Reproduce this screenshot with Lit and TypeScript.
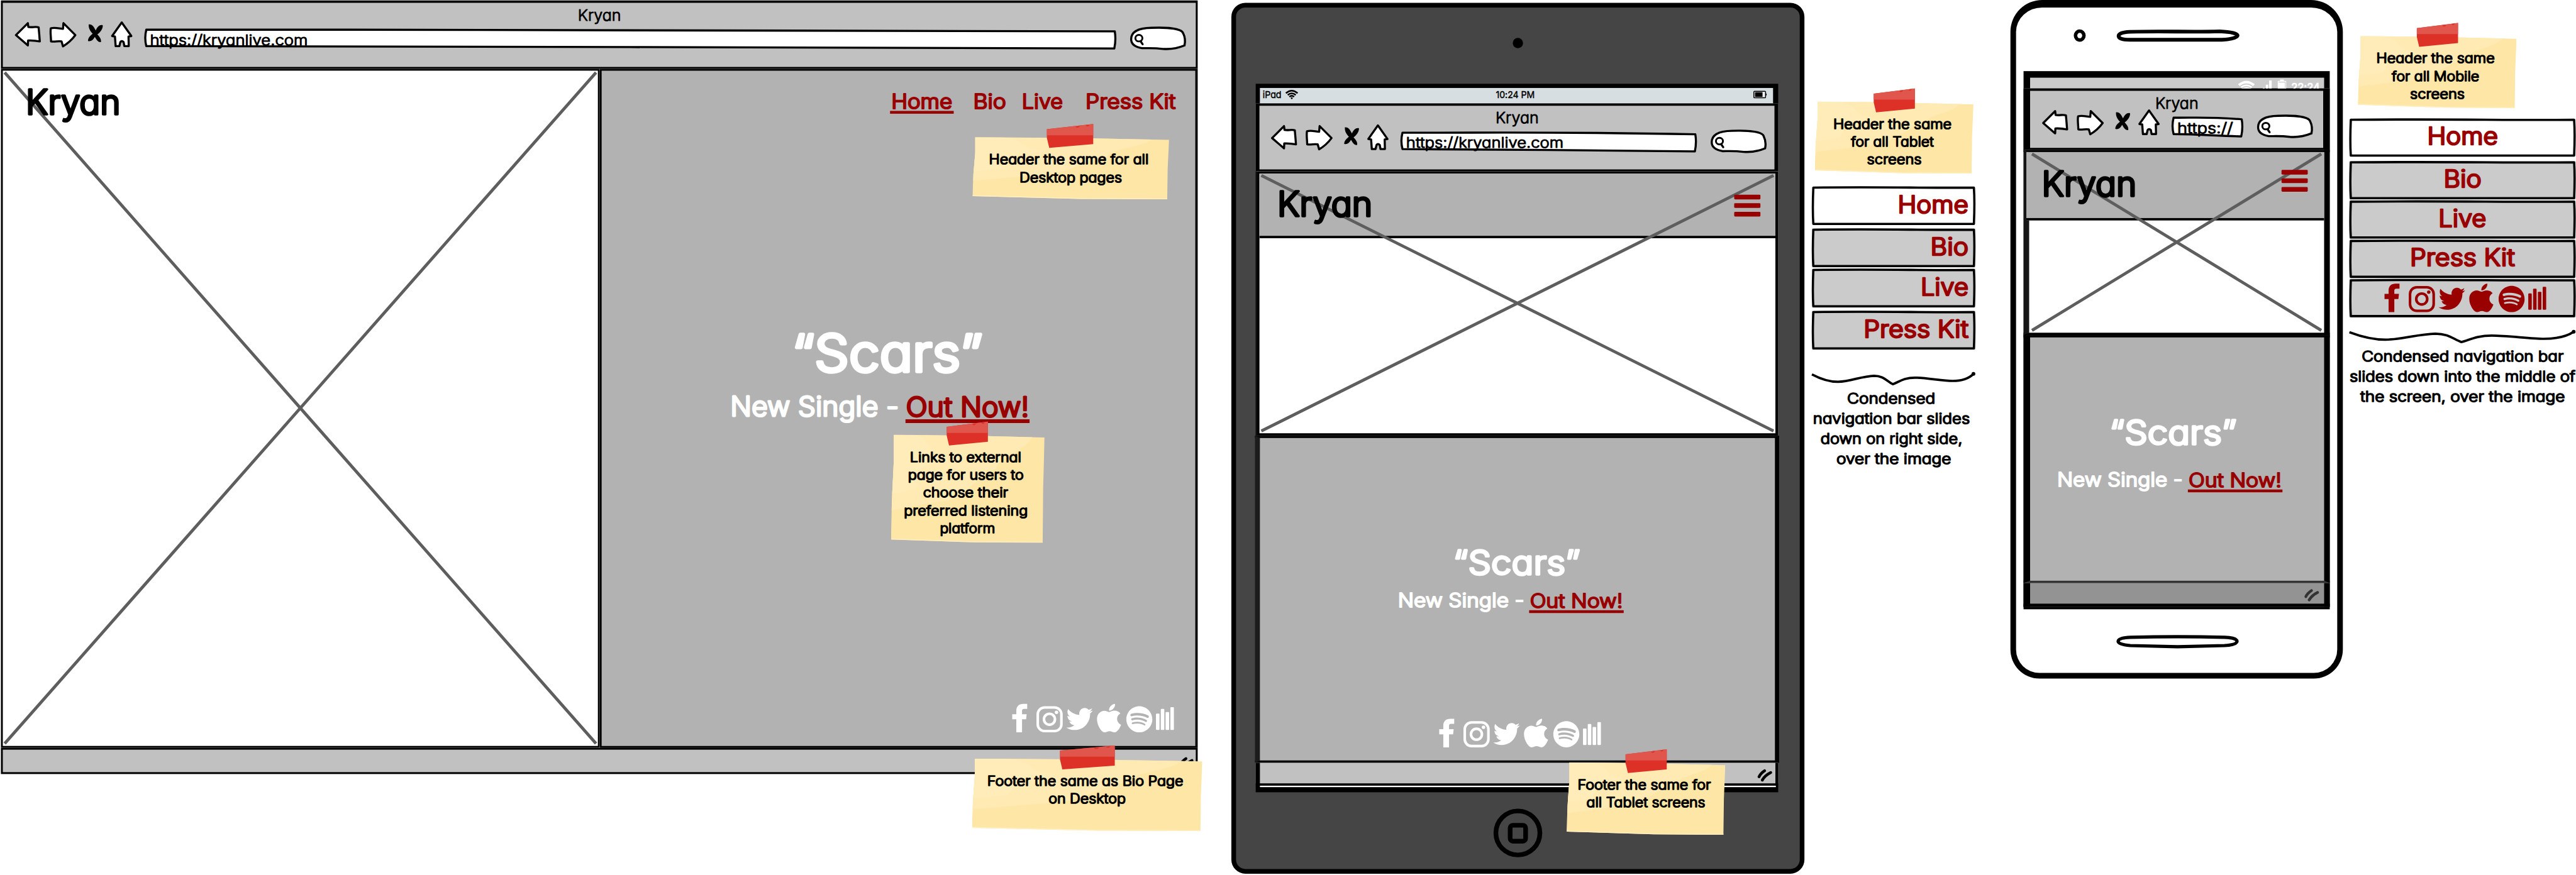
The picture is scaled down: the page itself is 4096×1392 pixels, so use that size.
import { LitElement, html, svg, css } from "lit";

const INK = "#000";
const RED = "#990000";

/* One line of lettering. The box is exactly as wide as the word and as tall as its capitals. */
const word = (text: string, width: number, cap: number, color = INK, weight = 300, stroke = 0.085) => {
  const pen = cap * stroke;
  const size = (cap - pen) / 0.727;
  return html`<svg class="word" width=${width} height=${cap} viewBox="0 0 ${width} ${cap}">
    <text x=${-size * 0.055} y=${cap - pen / 2} textLength=${width + size * 0.1} lengthAdjust="spacingAndGlyphs"
      font-size=${size} font-weight=${weight} fill=${color} stroke=${color} stroke-width=${pen}>${text}</text>
  </svg>`;
};

const sharedStyles = css`
  * { box-sizing: border-box; }
  .word {
    display: block; overflow: visible; flex: none;
    font-family: Inter, "Open Sans", sans-serif;
    font-feature-settings: "cv11" 1, "calt" 0;
    stroke-linejoin: round; white-space: pre;
  }
  svg { display: block; flex: none; overflow: visible; }
`;

class StickyNote extends LitElement {
  static properties = {
    lines: { attribute: false }, w: { type: Number }, h: { type: Number },
    tapeX: { type: Number }, tapeW: { type: Number },
  };
  declare lines: [string, number][];
  declare w: number;
  declare h: number;
  declare tapeX: number;
  declare tapeW: number;
  static styles = [sharedStyles, css`
    :host { display: block; flex: none; }
    .note { position: relative; }
    .paper { position: absolute; left: 0; top: 0; }
    .lines { position: relative; display: flex; flex-direction: column; align-items: center; gap: 15px; padding-top: 36px; }
    .line { margin-right: 8px; }
    .line:last-child { margin-right: 0; }
  `];
  render() {
    const { w, h, tapeX: x, tapeW: t } = this;
    return html`<div class="note" style="width:${w}px">
      <svg class="paper" width=${w} height=${h} viewBox="0 0 ${w} ${h}">
        <defs>
          <clipPath id="sheet"><path d="M6 0L${w * 0.5} 2L${w} 6L${w - 3} ${h * 0.5}L${w - 4} ${h}L${w * 0.55} ${h - 1}L0 ${h - 7}L2 ${h * 0.6}L6 ${h * 0.25}Z"/></clipPath>
        </defs>
        <g clip-path="url(#sheet)">
          <rect width=${w} height=${h} fill="#fee6a7"/>
          <path d="M0 0H${w * 0.93}C${w * 0.85} ${h * 0.2} ${w * 0.72} ${h * 0.15} ${w * 0.68} ${h * 0.32}C${w * 0.5} ${h * 0.42} ${w * 0.52} ${h * 0.6} ${w * 0.3} ${h * 0.62}L0 ${h * 0.7}Z" fill="#ffeab3"/>
          <path d="M0 0H${w * 0.16}C${w * 0.3} ${h * 0.08} ${w * 0.22} ${h * 0.2} ${w * 0.38} ${h * 0.22}L${w * 0.2} ${h * 0.3}L${w * 0.16} ${h * 0.5}L0 ${h * 0.55}Z" fill="#ffecb9"/>
          <path d="M0 ${h - 7}L${w * 0.55} ${h - 1}L${w} ${h}" fill="none" stroke="#ffeec0" stroke-width="4"/>
        </g>
        <g transform="translate(${x} -28)">
          <path d="M0 11L${t} 0V43L5 51L0 30Z" fill="#dd3127"/>
          <path d="M0 11L${t} 0V24H0Z" fill="#e0554c"/>
          <path d="M${t * 0.62} 5.5C${t * 0.64} 9 ${t * 0.7} 8 ${t * 0.71} 4ZM${t * 0.84} 2.5C${t * 0.86} 6 ${t * 0.91} 5 ${t * 0.92} 1.5Z" fill="#dd3127"/>
        </g>
      </svg>
      <div class="lines">${this.lines.map(([text, width]) => html`<div class="line">${word(text, width, 23, INK, 300, 0.09)}</div>`)}</div>
    </div>`;
  }
}
customElements.define("sticky-note", StickyNote);

class BrowserBar extends LitElement {
  static properties = {
    w: { type: Number }, h: { type: Number }, side: { type: Number }, lead: { type: Number },
    urlW: { type: Number }, url: {}, textW: { type: Number },
  };
  declare w: number;
  declare h: number;
  declare side: number;
  declare lead: number;
  declare urlW: number;
  declare url: string;
  declare textW: number;
  static styles = [sharedStyles, css`
    :host { display: block; flex: none; }
    .bar { background: #c1c1c1; border: 0 solid #000; border-top-width: 5px; border-bottom-width: 4px; }
    .title { display: flex; justify-content: center; padding-top: 13px; }
    .tools { display: flex; align-items: flex-start; }
    .address { position: relative; margin: 16px 29px 0 21px; }
    .frame { position: absolute; left: 0; top: 0; }
    .url { position: relative; padding: 12px 0 0 14px; }
    .find { margin-top: 12px; }
  `];
  render() {
    const u = this.urlW;
    return html`<div class="bar" style="width:${this.w}px;height:${this.h}px;border-left-width:${this.side}px;border-right-width:${this.side}px">
      <div class="title">${word("Kryan", 89, 25.5, INK, 300, 0.05)}</div>
      <div class="tools" style="padding-left:${this.lead - this.side}px">
        <svg width="258" height="58" viewBox="29 45 258 58" fill="#fff" stroke="#000" stroke-width="4.500" stroke-linejoin="round">
          <path d="M34 75L59.500 49.500L60.500 57.500C68 59.500 76 56 82.500 58.500Q84 74 85 88.500Q72 86 60 86.500L59.500 97Z"/>
          <path d="M161 75L135.500 49.500L134.500 61.500C126 61 117 58 108.500 60.500C107 70 109 79 109 88.500C117 90 124 87 131.500 88.500L134.500 99Q150 90 161 75Z"/>
          <path d="M260 48L280.500 77L274.500 78L275 98.500H265.500L264 90Q260 86 257 90L255 98.500H247L245.500 78L239.500 77Z"/>
          <path d="M189.500 52C197 51 201 58 204.500 65C208 57 214 52 219.500 54C220 62 214 69 208 73.500C213 79 217 84 215.500 90C209 91 206 84 202.500 79C199 86 194 89 188 87.500C188 81 193 76 198 72C192 66 189 60 189.500 52Z" fill="#000" stroke="none"/>
        </svg>
        <div class="address">
          <svg class="frame" width=${u} height="45" viewBox="0 0 ${u} 45">
            <path d="M4.500 2.500C${u * 0.3} 3 ${u * 0.5} 0 ${u - 4} 6Q${u - 1} 24 ${u - 5} 42.500C${u * 0.6} 41 ${u * 0.4} 38 4.500 37.500Q0 20 4.500 2.500Z" fill="#fff" stroke="#000" stroke-width="4.500" stroke-linejoin="round"/>
          </svg>
          <div class="url" style="width:${u}px">${word(this.url, this.textW, 24, INK, 300, 0.06)}</div>
        </div>
        <svg class="find" width="119" height="50" viewBox="0 0 119 50" fill="#fff" stroke="#000" stroke-linecap="round">
          <path d="M2 27C2 12 16 3 45 2.500C85 1 110 5 113 14Q119 26 116 40C104 45 90 49 70 47.500C50 45 38 46 25 46Q2 42 2 27Z" stroke-width="4.500"/>
          <ellipse cx="18.500" cy="24.500" rx="7.500" ry="7" stroke-width="4"/>
          <path d="M22 31L26.500 37.500" stroke-width="4.500"/>
        </svg>
      </div>
    </div>`;
  }
}
customElements.define("browser-bar", BrowserBar);

const socialIcons = (color: string) => html`<svg width="346" height="61" viewBox="0 0 346 61" fill=${color}>
  <svg width="32" height="61" viewBox="410 163 81 182" preserveAspectRatio="none"><path d="M432 229V208C432 178 446 163 470 163H491V195H474C465 195 463 201 463 209V229H488L485 262H463V345H432V262H410V229Z"/></svg>
  <g fill="none" stroke=${color}>
    <rect x="54.500" y="7.800" width="50.500" height="50.500" rx="14.500" stroke-width="5.500"/>
    <circle cx="79.500" cy="33" r="11.700" stroke-width="5.600"/>
  </g>
  <circle cx="94.500" cy="18.300" r="3.700"/>
  <svg x="115.600" y="9" width="56.500" height="47" viewBox="0 48 512 416" preserveAspectRatio="none"><path d="M459.370 151.716c.325 4.548.325 9.097.325 13.645 0 138.720-105.583 298.558-298.558 298.558-59.452 0-114.680-17.219-161.137-47.106 8.447.974 16.568 1.299 25.340 1.299 49.055 0 94.213-16.568 130.274-44.832-46.132-.975-84.792-31.188-98.112-72.772 6.498.974 12.995 1.624 19.818 1.624 9.421 0 18.843-1.300 27.614-3.573-48.081-9.747-84.143-51.980-84.143-102.985v-1.299c13.969 7.797 30.214 12.670 47.431 13.319-28.264-18.843-46.781-51.005-46.781-87.391 0-19.492 5.197-37.360 14.294-52.954 51.655 63.675 129.300 105.258 216.365 109.807-1.624-7.797-2.599-15.918-2.599-24.040 0-57.828 46.782-104.934 104.934-104.934 30.213 0 57.502 12.670 76.670 33.137 23.715-4.548 46.456-13.320 66.599-25.340-7.798 24.366-24.366 44.833-46.132 57.827 21.117-2.273 41.584-8.122 60.426-16.243-14.292 20.791-32.161 39.308-52.628 54.253z"/></svg>
  <svg x="181" y="0" width="51.500" height="61" viewBox="4 32 376.500 448" preserveAspectRatio="none"><path d="M318.700 268.700c-.2-36.700 16.400-64.400 50-84.800-18.800-26.900-47.200-41.700-84.700-44.600-35.500-2.800-74.300 20.700-88.500 20.700-15 0-49.400-19.700-76.400-19.700C63.300 141.200 4 184.800 4 273.500q0 39.300 14.400 81.200c12.800 36.700 59 126.700 107.200 125.200 25.200-.6 43-17.900 75.800-17.900 31.800 0 48.300 17.900 76.400 17.900 48.600-.7 90.400-82.500 102.600-119.300-65.200-30.700-61.700-90-61.700-91.900zm-56.600-164.200c27.300-32.400 24.800-61.900 24-72.500-24.100 1.400-52 16.400-67.900 34.900-17.500 19.800-27.800 44.300-25.600 71.900 26.100 2 49.900-11.400 69.500-34.300z"/></svg>
  <svg x="243.700" y="5" width="55.500" height="56" viewBox="0 8 496 496" preserveAspectRatio="none"><path d="M248 8C111.100 8 0 119.100 0 256s111.100 248 248 248 248-111.100 248-248S384.900 8 248 8zm100.700 364.900c-4.200 0-6.800-1.300-10.700-3.600-62.400-37.600-135-39.200-206.700-24.500-3.900 1-9 2.600-11.900 2.600-9.700 0-15.800-7.700-15.800-15.800 0-10.300 6.100-15.200 13.600-16.800 81.900-18.100 165.600-16.500 237 26.200 6.100 3.900 9.700 7.400 9.700 16.500s-7.100 15.400-15.200 15.400zm26.900-65.600c-5.200 0-8.700-2.300-12.300-4.200-62.500-37-155.700-51.900-238.600-29.400-4.800 1.300-7.400 2.600-11.900 2.600-10.700 0-19.400-8.700-19.400-19.400s5.200-17.800 15.500-20.700c27.800-7.800 56.200-13.600 97.800-13.600 64.900 0 127.600 16.100 177 45.500 8.100 4.800 11.300 11 11.300 19.700-.1 10.800-8.500 19.500-19.400 19.500zm31-76.200c-5.200 0-8.400-1.300-12.900-3.900-71.200-42.500-198.500-52.700-280.900-29.700-3.600 1-8.100 2.600-12.900 2.600-13.200 0-23.300-10.300-23.300-23.600 0-13.600 8.400-21.300 17.400-23.900 35.200-10.300 74.600-15.200 117.500-15.200 73 0 149.500 15.200 205.400 47.800 7.800 4.500 12.900 10.700 12.900 22.600 0 13.600-11 23.300-23.200 23.300z"/></svg>
  ${[[0, 21], [10.300, 11], [20.600, 17.500], [30.800, 7]].map(([x, y]) => svg`<rect x=${307 + x} y=${y} width="7.500" height=${56 - y} rx="1.500"/>`)}
</svg>`;

const cross = (w: number, h: number) => html`<svg class="cross" width=${w} height=${h} viewBox="0 0 ${w} ${h}">
  <path d="M4 4L${w - 4} ${h - 5}M${w - 4} 4L4 ${h - 5}" stroke="#5e5e5e" stroke-width="6.500"/></svg>`;

const burger = html`<svg width="56" height="47" viewBox="0 0 56 47" fill=${RED}>
  ${[0, 18.300, 36.600].map((y) => svg`<rect y=${y} width="56" height="10" rx="2"/>`)}</svg>`;

const grip = (color: string) => html`<svg width="32" height="26" viewBox="0 0 32 26" fill="none" stroke=${color} stroke-width="6" stroke-linecap="round">
  <path d="M3 16Q6 9 15 3M10 23Q16 13 28 7"/></svg>`;

const brace = (w: number) => html`<svg width=${w} height="30" viewBox="0 0 ${w} 30">
  <path d="M0 5C${w * 0.06} 16 ${w * 0.11} 21 ${w * 0.16} 21C${w * 0.24} 20 ${w * 0.3} 9 ${w * 0.38} 8C${w * 0.44} 8 ${w * 0.46} 20 ${w * 0.495} 26C${w * 0.53} 22 ${w * 0.56} 12 ${w * 0.63} 12C${w * 0.7} 12 ${w * 0.8} 19 ${w * 0.86} 19C${w * 0.92} 19 ${w * 0.96} 14 ${w - 4} 4"
    fill="none" stroke="#000" stroke-width="5" stroke-linejoin="round"/>
  <circle cx=${w - 4} cy="4" r="4"/></svg>`;

const single = (white: number, gap: number, red: number, cap: number, line: number) => html`<div class="single">
  ${word("New Single -", white, cap, "#fff")}
  <div class="out" style="margin-left:${gap}px">
    <div class="outword">${word("Out Now!", red, cap, RED)}</div>
    <div class="rule" style="height:${line}px"></div>
  </div></div>`;

const menuButton = (w: number, h: number, fill: string, content: unknown, cls: string) => html`<div class="button ${cls}" style="width:${w}px;height:${h}px">
  <svg class="edge" width=${w} height=${h} viewBox="0 0 ${w} ${h}">
    <rect width=${w} height=${h} fill=${fill}/>
    <path d="M3 3C${w * 0.4} 1 ${w * 0.7} 4 ${w - 3} 3Q${w - 1} ${h * 0.4} ${w - 3} ${h - 3}C${w * 0.6} ${h - 2} ${w * 0.3} ${h - 4} 3 ${h - 3}Q1 ${h * 0.6} 3 3Z" fill="none" stroke="#000" stroke-width="4.800" stroke-linejoin="round"/>
  </svg>
  <div class="label">${content}</div></div>`;

const redWord = (text: string, width: number) => word(text, width, 40, RED);

class AppRoot extends LitElement {
  static styles = [sharedStyles, css`
    :host { display: block; width: 4096px; height: 1392px; overflow: hidden; background: #fff; }
    .board { transform: scale(0.74446); transform-origin: 0 0; width: 5502px; height: 1870px; display: flex; align-items: flex-start; }
    .desktop { position: relative; width: 2556px; margin: 1px 0 0 2px; flex: none; }
    .panels { display: flex; height: 1451px; }
    .picture { position: relative; background: #fff; border: 4px solid #000; }
    .desktop .picture { width: 1279px; padding: 38px 0 0 53px; }
    .cross { position: absolute; left: 0; top: 0; }
    .logo { position: relative; }
    .info { background: #b2b2b2; border: 4px solid #000; display: flex; flex-direction: column; }
    .desktop .info { width: 1277px; border-right-width: 5px; }
    .nav { display: flex; align-self: flex-end; padding: 48px 44px 0 0; }
    .underlined { border-bottom: 6.5px solid #990000; padding: 0 5px 3px; margin: 0 -5px; }
    .g-bio { margin-left: 49px; } .g-live { margin-left: 38px; } .g-press { margin-left: 53px; }
    .single { display: flex; align-items: flex-start; }
    .outword { padding: 2px 4px 3px; }
    .out { display: flex; flex-direction: column; }
    .rule { background: #990000; }
    .d-scars { padding: 468px 0 0 413px; }
    .d-single { padding: 48px 0 0 278px; height: 109px; }
    .d-social { padding: 598px 0 0 877px; }
    .status { height: 56px; background: #c1c1c1; border: 4px solid #000; display: flex; justify-content: flex-end; }
    .desktop .status { padding: 16px 4px 0 0; }
    .float { position: absolute; }
    .n1 { left: 2074.5px; top: 292px; } .n3 { left: 1900.600px; top: 928px; } .n4 { left: 2074.300px; top: 1620px; }
    .n5 { left: 706px; top: 1613px; }

    .tablet { position: relative; flex: none; width: 1224px; height: 1861px; margin: 6px 0 0 72px; background: #454545; border: 10px solid #000; border-radius: 30px; display: flex; flex-direction: column; padding-left: 42px; }
    .camera { width: 22px; height: 22px; border-radius: 50%; background: #000; margin: 65px 0 76px 549px; }
    .screen { width: 1116px; height: 1514px; background: #000; padding-top: 9px; flex: none; }
    .ipad { height: 33px; margin: 0 11px 0 9px; background: #d6dee1; border-bottom: 1px solid #fff; display: flex; align-items: center; justify-content: space-between; padding: 0 13px 4px 7px; }
    .ipadname { display: flex; gap: 9px; align-items: center; width: 76px; }
    .ipadbatt { width: 29px; margin-left: 47px; }
    .tablet .picture { height: 565px; width: 1114px; border-width: 5px 6px; margin-left: 2px; }
    .band { height: 138px; background: #b2b2b2; border-bottom: 5px solid #000; }
    .top { position: absolute; left: 0; right: 0; top: 0; display: flex; justify-content: space-between; align-items: flex-start; }
    .tablet .top { padding: 36px 32px 0 42px; }
    .tablet .info { height: 699px; width: 1120px; border: 5px solid #000; border-left-color: #1c1c1c; border-left-width: 11px; border-right-width: 9px; margin-left: -2px; }
    .t-scars { padding: 237px 0 0 417px; }
    .t-single { padding: 35px 0 0 297px; height: 68.500px; }
    .t-social { padding: 237px 0 0 383px; }
    .tablet .status { height: 49px; border-width: 0 6px 5px 9px; padding: 14px 6px 0 0; }
    .whiteline { height: 3px; background: #fff; margin: 0 5px 0 9px; }
    .homebtn { margin: 35px 0 0 508px; }

    .tside { width: 349px; margin: 217px 0 0 16px; flex: none; display: flex; flex-direction: column; }
    .tnote { margin-left: 6px; height: 181px; }
    .button { position: relative; display: flex; }
    .edge { position: absolute; left: 0; top: 0; }
    .label { position: relative; flex: 1; display: flex; padding-top: 18.5px; }
    .right .label { justify-content: flex-end; padding-right: 17px; }
    .mid .label { justify-content: center; padding-top: 18px; }
    .mid.social .label { padding: 10px 0 0 12px; }
    .b7 { margin-bottom: 6.5px; } .b3 { margin-bottom: 2.5px; } .b8 { margin-bottom: 8px; } .b1 { margin-bottom: 1.5px; }
    .caption { display: flex; flex-direction: column; align-items: center; gap: 18px; }
    .tside .caption { padding-top: 13px; } .tside .caption > :not(:last-child) { margin-right: 10px; }
    .tbrace { padding-top: 47.5px; }

    .phone { flex: none; width: 710px; height: 1450px; margin-left: 75px; border: 12px solid #000; border-top-width: 16px; border-radius: 68px 68px 62px 62px; background: #fff; padding-left: 16px; display: flex; flex-direction: column; }
    .ears { display: flex; align-items: center; gap: 66px; padding: 47px 0 63px 107px; flex: none; }
    .pscreen { width: 654px; height: 1150px; background: #000; padding-top: 14px; flex: none; }
    .android { height: 23px; margin: 0 12px 0 14px; background: #cbcbcb; overflow: hidden; display: flex; justify-content: flex-end; align-items: flex-start; padding: 4px 10px 0 0; }
    .android .clock { margin: 7px 0 0 11px; }
    .phone .picture { height: 396px; border-width: 5px 12px 5px 12px; border-left-color: #161616; }
    .phone .band { height: 146px; margin-left: -6px; }
    .phone .cross { left: 2px; }
    .phone .top { padding: 38px 35px 0 31px; }
    .phone .info { height: 530px; border-width: 5px 12px 5px 14px; border-bottom-color: #333; }
    .p-scars { padding: 174px 0 0 174px; }
    .p-single { padding: 55px 0 0 60px; }
    .phone .status { height: 51px; background: #939393; border-width: 0 12px 7px 14px; padding: 13px 10px 0 0; }
    .pill { margin: 55px 0 0 213px; }

    .mside { width: 483px; margin: 77px 0 0 14px; flex: none; display: flex; flex-direction: column; }
    .mnote { margin-left: 18px; height: 176px; }
    .mbrace { padding-top: 27px; }
    .mside .caption { padding-top: 14px; }
  `];

  render() {
    return html`<div class="board">
      <section class="desktop">
        <browser-bar .w=${2556} .h=${146} .side=${4} .lead=${27} .urlW=${2077} .url=${"https://kryanlive.com"} .textW=${334}></browser-bar>
        <div class="panels">
          <div class="picture">${cross(1271, 1443)}<div class="logo">${word("Kryan", 195, 58)}</div></div>
          <div class="info">
            <nav class="nav">
              <div class="underlined">${word("Home", 126, 35, RED)}</div>
              <div class="g-bio">${word("Bio", 66, 35, RED)}</div>
              <div class="g-live">${word("Live", 83, 35, RED)}</div>
              <div class="g-press">${word("Press Kit", 188, 35, RED)}</div>
            </nav>
            <div class="d-scars">${word("“Scars”", 396, 86, "#fff")}</div>
            <div class="d-single">${single(354, 17, 257, 46, 8)}</div>
            <div class="d-social">${socialIcons("#fff")}</div>
          </div>
        </div>
        <div class="status">${grip(INK)}</div>
        <sticky-note class="float n1" .w=${420} .h=${133} .tapeX=${159} .tapeW=${99}
          .lines=${[["Header the same for all", 338], ["Desktop pages", 216]]}></sticky-note>
        <sticky-note class="float n3" .w=${328} .h=${231} .tapeX=${119} .tapeW=${88}
          .lines=${[["Links to external", 235], ["page for users to", 244], ["choose their", 179], ["preferred listening", 262], ["platform", 115]]}></sticky-note>
        <sticky-note class="float n4" .w=${492} .h=${155} .tapeX=${188} .tapeW=${117}
          .lines=${[["Footer the same as Bio Page", 416], ["on Desktop", 162]]}></sticky-note>
      </section>

      <section class="tablet">
        <div class="camera"></div>
        <div class="screen">
          <div class="ipad">
            <div class="ipadname">${word("iPad", 38, 15, INK, 400, 0.04)}
              <svg width="28" height="20" viewBox="0 0 28 20" fill="none" stroke="#000" stroke-width="3.500">
                <path d="M1.500 7Q14 -3.500 26.500 7M5.500 11Q14 4 22.500 11M9 15Q14 10.500 19 15"/><circle cx="14" cy="18" r="1" stroke-width="2"/></svg>
            </div>
            ${word("10:24 PM", 81, 15, INK, 400, 0.04)}
            <div class="ipadbatt"><svg width="29" height="16" viewBox="0 0 29 16">
              <rect x="1" y="1" width="25" height="14" rx="1.500" fill="#eef2f3" stroke="#000" stroke-width="2"/><rect x="3.500" y="3" width="16" height="10"/><path d="M27 5Q30 8 27 11Z"/></svg></div>
          </div>
          <browser-bar .w=${1116} .h=${145} .side=${8} .lead=${29.5} .urlW=${634} .url=${"https://kryanlive.com"} .textW=${333}></browser-bar>
          <div class="picture"><div class="band"></div>${cross(1102, 555)}<div class="top">${word("Kryan", 196, 58)}<div style="padding-top:9px">${burger}</div></div></div>
          <div class="info">
            <div class="t-scars">${word("“Scars”", 264, 57, "#fff")}</div>
            <div class="t-single">${single(265.500, 12.500, 194, 33.500, 6.500)}</div>
            <div class="t-social">${socialIcons("#fff")}</div>
          </div>
          <div class="status">${grip(INK)}</div>
          <div class="whiteline"></div>
        </div>
        <svg class="homebtn" width="104" height="104" viewBox="0 0 104 104" fill="none" stroke="#000" stroke-width="10">
          <circle cx="52" cy="52" r="47"/><rect x="35.500" y="35.500" width="33" height="34" rx="6"/></svg>
        <sticky-note class="float n5" .w=${339} .h=${155} .tapeX=${126} .tapeW=${88}
          .lines=${[["Footer the same for", 282], ["all Tablet screens", 251]]}></sticky-note>
      </section>

      <section class="tside">
        <sticky-note class="tnote" .w=${339} .h=${154} .tapeX=${126} .tapeW=${88}
          .lines=${[["Header the same", 250], ["for all Tablet", 174], ["screens", 114]]}></sticky-note>
        ${menuButton(349, 83.500, "#fff", redWord("Home", 146), "right b7")}
        ${menuButton(349, 83.500, "#cbcbcb", redWord("Bio", 76), "right b3")}
        ${menuButton(349, 83.500, "#cbcbcb", redWord("Live", 97), "right b7")}
        ${menuButton(349, 83.500, "#cbcbcb", redWord("Press Kit", 219), "right")}
        <div class="tbrace">${brace(349)}</div>
        <div class="caption">
          ${word("Condensed", 185, 25)}
          ${word("navigation bar slides", 332, 25)}
          ${word("down on right side,", 300, 25)}
          ${word("over the image", 242, 25)}
        </div>
      </section>

      <section class="phone">
        <div class="ears">
          <svg width="26" height="26" viewBox="0 0 26 26"><ellipse cx="13" cy="13" rx="9" ry="9.500" fill="none" stroke="#000" stroke-width="7.500"/></svg>
          <svg width="262" height="26" viewBox="0 0 262 26"><path d="M28 5C100 3 160 6 220 4Q258 6 258 13Q256 20 225 22H28Q4 22 4 14Q4 6 28 5Z" fill="#fff" stroke="#000" stroke-width="8"/></svg>
        </div>
        <div class="pscreen">
          <div class="android">
            <svg width="104" height="26" viewBox="0 0 104 26" fill="#fff">
              <path d="M0 10Q18 -5 36 10L18 28Z"/><path d="M4 15Q18 4 32 15M8 19Q18 11 28 19" fill="none" stroke="#cbcbcb" stroke-width="2"/>
              <rect x="53" y="18" width="4" height="8"/><rect x="59.500" y="11" width="5" height="15"/><rect x="66.500" y="2" width="5.500" height="24"/>
              <path d="M85 3H90V0H98V3H103V26H85Z"/><path d="M87 5.500H101V26" fill="none" stroke="#cbcbcb" stroke-width="1.500"/></svg>
            <div class="clock">${word("22:24", 59, 18, "#fff", 500, 0.045)}</div>
          </div>
          <browser-bar .w=${654} .h=${131} .side=${14} .lead=${37} .urlW=${154} .url=${"https://"} .textW=${116}></browser-bar>
          <div class="picture"><div class="band"></div>${cross(626, 386)}<div class="top">${word("Kryan", 195, 58)}${burger}</div></div>
          <div class="info">
            <div class="p-scars">${word("“Scars”", 264, 57, "#fff")}</div>
            <div class="p-single">${single(264, 13, 194, 33.500, 6)}</div>
          </div>
          <div class="status">${grip("#333")}</div>
        </div>
        <svg class="pill" width="262" height="29" viewBox="0 0 262 29"><path d="M30 5Q131 2 232 5Q258 6 258 13.500Q257 21 231 22.500L131 25L30 22.500Q4 20 4 13.500Q5 6 30 5Z" transform="translate(-15)" fill="#fff" stroke="#000" stroke-width="7"/></svg>
      </section>

      <section class="mside">
        <sticky-note class="mnote" .w=${339} .h=${154} .tapeX=${126} .tapeW=${88}
          .lines=${[["Header the same", 250], ["for all Mobile", 184], ["screens", 114]]}></sticky-note>
        ${menuButton(483, 82.500, "#fff", redWord("Home", 146), "mid b8")}
        ${menuButton(483, 82.500, "#cbcbcb", redWord("Bio", 76), "mid b1")}
        ${menuButton(483, 82.500, "#cbcbcb", redWord("Live", 97), "mid b1")}
        ${menuButton(483, 82.500, "#cbcbcb", redWord("Press Kit", 219), "mid b1")}
        ${menuButton(483, 82.500, "#cbcbcb", socialIcons(RED), "mid social")}
        <div class="mbrace">${brace(483)}</div>
        <div class="caption">
          ${word("Condensed navigation bar", 428, 25)}
          ${word("slides down into the middle of", 479, 25)}
          ${word("the screen, over the image", 434, 25)}
        </div>
      </section>
    </div>`;
  }
}
customElements.define("app-root", AppRoot);
